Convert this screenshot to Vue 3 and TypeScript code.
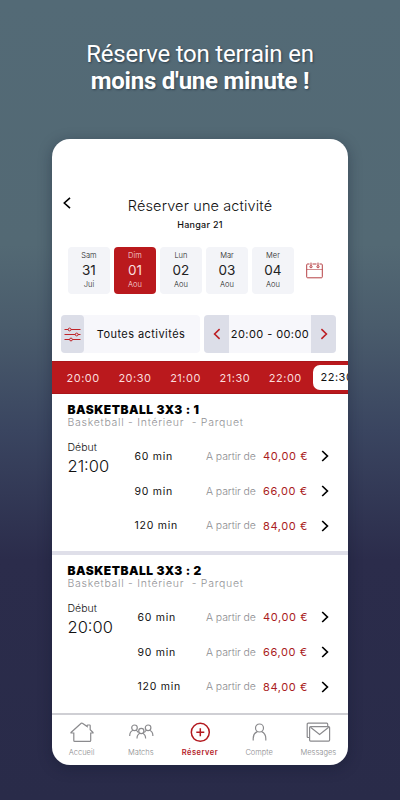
<script setup lang="ts">
interface Day { name: string; num: string; month: string; active?: boolean }
interface Option { duration: string; price: string }
interface Court { title: string; start: string; options: Option[] }

const days: Day[] = [
  { name: 'Sam', num: '31', month: 'Jui' },
  { name: 'Dim', num: '01', month: 'Aou', active: true },
  { name: 'Lun', num: '02', month: 'Aou' },
  { name: 'Mar', num: '03', month: 'Aou' },
  { name: 'Mer', num: '04', month: 'Aou' },
]
const slots: string[] = ['20:00', '20:30', '21:00', '21:30', '22:00']
const options: Option[] = [
  { duration: '60 min', price: '40,00 €' },
  { duration: '90 min', price: '66,00 €' },
  { duration: '120 min', price: '84,00 €' },
]
const courts: Court[] = [
  { title: 'BASKETBALL 3X3 : 1', start: '21:00', options },
  { title: 'BASKETBALL 3X3 : 2', start: '20:00', options },
]
</script>

<template>
  <main class="page">
    <h1 class="headline">
      <span class="line1">Réserve ton terrain en</span>
      <strong class="line2">moins d'une minute !</strong>
    </h1>

    <div class="phone">
      <header class="top">
        <svg class="back" viewBox="0 0 8 12"><path d="M7 .8 1.3 6 7 11.2" /></svg>
        <div class="titles">
          <div class="title">Réserver une activité</div>
          <div class="venue">Hangar 21</div>
        </div>
      </header>

      <div class="days">
        <div v-for="d in days" :key="d.num" class="day" :class="{ active: d.active }">
          <span class="day-text">{{ d.name }}</span>
          <span class="day-num">{{ d.num }}</span>
          <span class="day-text">{{ d.month }}</span>
        </div>
        <svg class="calendar" viewBox="0 0 17 17">
          <path d="M3.500 2H1.600q-.9 0-.9.9v12q0 .9.9.9h13.800q.9 0 .9-.9v-12q0-.9-.9-.9h-1.900M6.500 2h4" />
          <path d="M.7 7.500h15.600" class="thin" />
          <circle cx="5" cy="4.700" r="1.100" /><circle cx="12" cy="4.700" r="1.100" />
          <path d="M5 .6v3M12 .6v3" />
        </svg>
      </div>

      <div class="filters">
        <div class="activity">
          <div class="tool">
            <svg class="sliders" viewBox="0 0 17 15">
              <path d="M.5 2.500h3.800M7 2.500h9.500M.5 7.500h10.800M14 7.500h2.500M.5 12.500h5.200M8.400 12.500h8.100" />
              <circle cx="5.600" cy="2.500" r="1.400" /><circle cx="12.700" cy="7.500" r="1.400" /><circle cx="7" cy="12.500" r="1.400" />
            </svg>
          </div>
          <div class="activity-label"><span>Toutes activités</span></div>
        </div>
        <div class="range">
          <div class="step"><svg viewBox="0 0 8 12"><path d="M6.600 1.200 1.600 6l5 4.800" /></svg></div>
          <div class="range-label"><span>20:00 - 00:00</span></div>
          <div class="step"><svg viewBox="0 0 8 12"><path d="M1.400 1.200 6.400 6l-5 4.800" /></svg></div>
        </div>
      </div>

      <div class="slots">
        <span v-for="s in slots" :key="s" class="slot">{{ s }}</span>
        <span class="slot selected">22:30</span>
      </div>

      <section v-for="c in courts" :key="c.title" class="court">
        <div class="court-title">{{ c.title }}</div>
        <div class="court-info">Basketball - Intérieur&nbsp; - Parquet</div>
        <div class="court-body">
          <div class="start" :class="{ narrow: c.start === '21:00' }">
            <span class="start-label">Début</span>
            <span class="start-time">{{ c.start }}</span>
          </div>
          <div class="options">
            <div v-for="o in c.options" :key="o.duration" class="option">
              <span class="duration">{{ o.duration }}</span>
              <span class="from">A partir de</span>
              <span class="price">{{ o.price }}</span>
              <svg class="go" viewBox="0 0 8 12"><path d="M1.200 1 6.400 6l-5.200 5" /></svg>
            </div>
          </div>
        </div>
      </section>

      <nav class="nav">
        <div class="item">
          <svg viewBox="0 0 26 22"><path d="M4.800 12v7.400q0 .9.9.9h15.100q.9 0 .9-.9V12h2.200q.5 0 .1-.5l-2.800-2.700V4.600q0-.6-.6-.6h-1.800q-.6 0-.6.600v1L13.400 2.300q-.6-.5-1.200 0L2 11.500q-.4.5.2.5z" /></svg>
          <span class="label">Accueil</span>
        </div>
        <div class="item">
          <svg viewBox="0 0 26 22">
            <circle cx="6.500" cy="6.800" r="2.800" /><circle cx="20.100" cy="6.800" r="2.800" /><circle cx="13.300" cy="10" r="2.600" />
            <path d="M1.700 15c0-3 1.200-4.900 3.300-5.700M8 9.300c1 .4 1.700 1.200 2.200 2.300M24.900 15c0-3-1.200-4.900-3.300-5.700M18.600 9.300c-1 .4-1.700 1.200-2.200 2.300M9 17.400c0-2.700 1.100-4.400 2.900-5.200M17.600 17.400c0-2.700-1.100-4.400-2.900-5.200" />
          </svg>
          <span class="label">Matchs</span>
        </div>
        <div class="item current">
          <svg viewBox="0 0 26 22"><circle cx="13.300" cy="11.300" r="9" /><path d="M13.300 7.300v8M9.300 11.300h8" /></svg>
          <span class="label">Réserver</span>
        </div>
        <div class="item">
          <svg viewBox="0 0 26 22"><circle cx="13.500" cy="7" r="4" /><path d="M7.200 19.500v-2c0-3.200 1.500-5.700 4.100-6.900M19.800 19.500v-2c0-3.200-1.500-5.700-4.100-6.900" /></svg>
          <span class="label">Compte</span>
        </div>
        <div class="item">
          <svg viewBox="0 0 26 22">
            <path d="M4.400 16.500H3.200q-1 0-1-1V3.200q0-1 1-1h18.500q1 0 1 1v2.200" />
            <rect x="4.600" y="5.600" width="20" height="14.500" rx="1" /><path d="m5.500 6.200 9.100 7.200 9.100-7.200" />
          </svg>
          <span class="label">Messages</span>
        </div>
      </nav>
    </div>
  </main>
</template>

<style>
body { margin: 0; }
</style>

<style scoped>
* { box-sizing: border-box; }
.page {
  width: 400px;
  height: 800px;
  overflow: hidden;
  padding-top: 41px;
  background: linear-gradient(180deg, #536a76 0, #536974 245px, #4a5c6c 325px, #3a4560 430px, #2b2c4b 560px, #292b49 100%);
  font-family: Inter, "Liberation Sans", sans-serif;
  color: #111;
}
svg { fill: none; stroke: currentColor; display: block; flex: none; }
.headline {
  margin: 0;
  height: 98px;
  display: flex;
  flex-direction: column;
  align-items: center;
  font: 400 24px/27px Roboto, sans-serif;
  color: #fff;
  text-shadow: 1px 1px 2px rgba(20, 35, 50, .55);
  white-space: nowrap;
}
.line1 { letter-spacing: -.21px; }
.line2 { font-weight: 700; letter-spacing: -.23px; }
.phone {
  width: 296px;
  height: 626px;
  margin: 0 auto;
  background: #fff;
  border-radius: 18px;
  overflow: hidden;
  display: flex;
  flex-direction: column;
  box-shadow: 0 3px 14px rgba(15, 20, 40, .35);
  white-space: nowrap;
}
.top { height: 108px; display: flex; padding: 57px 0 0 11px; flex: none; }
.back { width: 8px; height: 12px; stroke-width: 1.6; color: #000; margin-top: 1px; }
.titles { flex: 1; margin-right: 19px; text-align: center; padding-top: 1px; }
.title { font-size: 14.500px; line-height: 18px; font-weight: 300; letter-spacing: .13px; }
.venue { font-size: 9px; line-height: 12px; font-weight: 500; letter-spacing: .28px; margin-top: 4px; }
.days { height: 47px; display: flex; gap: 3.500px; padding-left: 15.700px; flex: none; }
.day {
  width: 42.500px;
  border-radius: 4px;
  background: #f3f4f8;
  display: flex;
  flex-direction: column;
  align-items: center;
  padding-top: 3px;
  color: #222;
}
.day-text { font-size: 7.500px; line-height: 12px; font-weight: 300; }
.day-num { font-size: 13.500px; line-height: 17px; }
.day.active { background: #ba191d; color: #f9dede; }
.calendar { width: 17px; height: 17px; margin: 15px 0 0 8.500px; color: #b64044; stroke-width: 1; }
.thin { stroke-width: .6; }
.filters { height: 38px; margin: 21px 12px 8px 8.500px; display: flex; justify-content: space-between; flex: none; font-size: 11px; }
.activity { width: 139.500px; display: flex; background: #f7f7fb; border-radius: 4px; }
.tool { width: 23.500px; background: #dcdee8; border-radius: 4px; display: flex; align-items: center; justify-content: center; color: #c02429; }
.sliders { width: 17px; height: 15px; stroke-width: 1; }
.activity-label { flex: 1; display: flex; align-items: center; justify-content: center; letter-spacing: .44px; padding-right: 2px; }
.range { width: 132px; display: flex; background: #f7f7fb; border-radius: 4px; overflow: hidden; }
.step { width: 25px; background: #dcdee8; color: #bd2025; display: flex; align-items: center; justify-content: center; }
.step svg { width: 8px; height: 12px; stroke-width: 1.600; }
.range-label { flex: 1; display: flex; align-items: center; justify-content: center; letter-spacing: .42px; }
.slots {
  height: 33px;
  flex: none;
  background: #ba191d;
  border-top: 1px solid #aa1519;
  border-bottom: 1px solid #aa1519;
  display: flex;
  align-items: center;
  gap: 18.700px;
  color: #fbdcdc;
  font-size: 11px;
  letter-spacing: .5px;
  padding-left: 14.500px;
}
.slot { flex: none; }
.selected { width: 50px; height: 25px; line-height: 25px; margin-left: -7.500px; padding-left: 7.500px; background: #fff; color: #111; border-radius: 7px; }
.court { height: 161px; padding: 9px 15.500px 0; border-bottom: 4px solid #dfdfe9; flex: none; }
.court:last-of-type { height: 158px; border-bottom: 0; }
.court-title { font-size: 12px; line-height: 13px; font-weight: 900; color: #000; letter-spacing: .5px; }
.court-info { font-size: 10.500px; line-height: 13px; color: #929296; font-weight: 300; letter-spacing: .73px; }
.court-body { display: flex; padding-top: 10px; }
.start { width: 70px; display: flex; flex-direction: column; padding-top: 2px; font-weight: 300; }
.start.narrow { width: 67px; }
.start-label { font-size: 10.500px; line-height: 13px; }
.start-time { font-size: 16.500px; line-height: 25px; }
.options { flex: 1; }
.option { height: 34.800px; display: flex; align-items: center; justify-content: flex-end; font-size: 10.500px; }
.duration { margin-right: auto; letter-spacing: .75px; }
.from { width: 57px; color: #8c8c90; font-weight: 300; letter-spacing: -.1px; }
.price { width: 57.500px; font-size: 11px; color: #aa1c22; letter-spacing: .6px; }
.go { width: 8px; height: 12px; stroke-width: 1.700; color: #000; margin-right: 4px; }
.nav { flex: 1; border-top: 2px solid #cfcfd4; display: grid; grid-template-columns: repeat(5, 59.200px); }
.item { display: flex; flex-direction: column; align-items: center; padding-top: 6px; color: #8b8b8e; }
.item svg { width: 26px; height: 22px; stroke-width: 1.200; }
.label { font-size: 7.500px; line-height: 10px; margin-top: 5px; font-weight: 300; }
.item.current { color: #b3191f; }
.item.current svg { stroke-width: 1.500; }
.item.current .label { font-weight: 600; letter-spacing: .5px; }
</style>
